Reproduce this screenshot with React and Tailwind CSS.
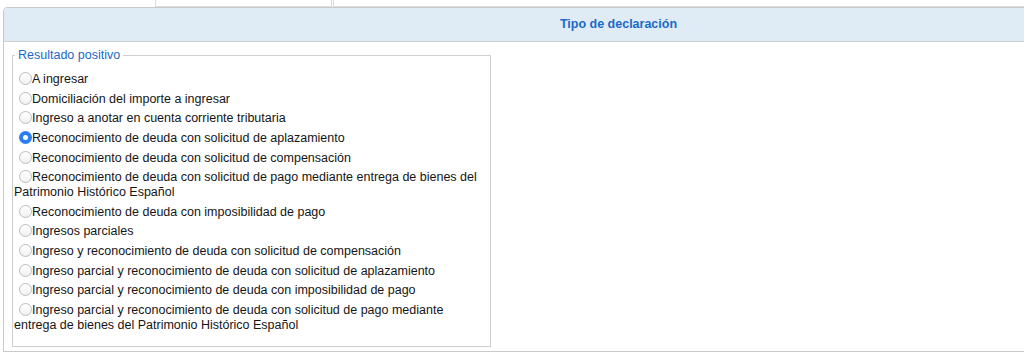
import React, { useState } from "react";

const opciones = [
  "A ingresar",
  "Domiciliación del importe a ingresar",
  "Ingreso a anotar en cuenta corriente tributaria",
  "Reconocimiento de deuda con solicitud de aplazamiento",
  "Reconocimiento de deuda con solicitud de compensación",
  "Reconocimiento de deuda con solicitud de pago mediante entrega de bienes del Patrimonio Histórico Español",
  "Reconocimiento de deuda con imposibilidad de pago",
  "Ingresos parciales",
  "Ingreso y reconocimiento de deuda con solicitud de compensación",
  "Ingreso parcial y reconocimiento de deuda con solicitud de aplazamiento",
  "Ingreso parcial y reconocimiento de deuda con imposibilidad de pago",
  "Ingreso parcial y reconocimiento de deuda con solicitud de pago mediante entrega de bienes del Patrimonio Histórico Español",
];

const Radio = ({ checked }) =>
  checked ? (
    <span className="inline-flex items-center justify-center w-[13px] h-[13px] rounded-full bg-[#2a7ef2] align-top ml-[5px]">
      <span className="w-[5px] h-[5px] rounded-full bg-white" />
    </span>
  ) : (
    <span className="inline-block w-[13px] h-[13px] rounded-full border border-[#bdbdbd] bg-gradient-to-b from-white to-[#f1f1f1] align-top ml-[5px]" />
  );

const App = () => {
  const [selected, setSelected] = useState(3);

  return (
    <div className="w-[1024px] h-[358px] overflow-hidden bg-white font-['Liberation_Sans',Arial,sans-serif] text-[12.5px] text-[#151515]">
      <div className="flex h-[7px]">
        <div className="w-[155px]" />
        <div className="w-[177px] border-x border-b border-[#dcdcdc] bg-white" />
        <div className="w-px" />
        <div className="flex-1 border-l border-b border-[#dcdcdc] bg-white" />
      </div>
      <div className="ml-[3px] w-[1231px] border border-[#c9c9c9] rounded-tl-[4px] bg-white">
        <div className="h-[34px] flex items-center justify-center bg-[#e0ecf5] border-b border-[#cfcfcf] rounded-tl-[4px]">
          <span className="font-bold text-[#1b6ac9]">Tipo de declaración</span>
        </div>
        <div className="pt-[6px] pb-[4px] pl-[8px]">
          <fieldset className="w-[479px] border border-[#cfcfcf] pl-[1px] pr-[6px] pt-[7px] pb-[11px]">
            <legend className="ml-[1px] px-[3px] leading-[15px] text-[#1b6ac9]">Resultado positivo</legend>
            {opciones.map((texto, i) => (
              <div
                key={texto}
                className="leading-[15px] py-[2.3px] cursor-pointer"
                onClick={() => setSelected(i)}
              >
                <Radio checked={selected === i} />
                {texto}
              </div>
            ))}
          </fieldset>
        </div>
      </div>
    </div>
  );
};

export default App;
